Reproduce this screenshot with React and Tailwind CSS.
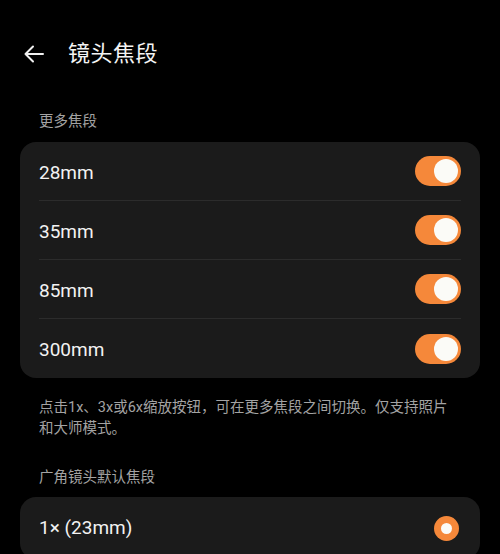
import React, { useState } from "react";

const Toggle = ({ on, onClick }) => (
  <button
    type="button"
    onClick={onClick}
    className={`relative w-[46px] h-[30px] rounded-full flex items-center px-[3px] ${
      on ? "bg-[#f5883a] justify-end" : "bg-[#3a3a3a] justify-start"
    }`}
  >
    <span className="block w-[24px] h-[24px] rounded-full bg-[#fbfbf7]" />
  </button>
);

const App = () => {
  const [lenses, setLenses] = useState({
    "28mm": true,
    "35mm": true,
    "85mm": true,
    "300mm": true,
  });

  const flip = (k) => setLenses({ ...lenses, [k]: !lenses[k] });
  const keys = Object.keys(lenses);

  return (
    <div
      className="w-[500px] h-[554px] overflow-hidden bg-black text-white"
      style={{ fontFamily: '"Roboto", "Noto Sans CJK SC", sans-serif' }}
    >
      {/* Header */}
      <div className="flex items-center h-[104px] pl-[22px] pt-[3px]">
        <svg width="24" height="24" viewBox="0 0 24 24" fill="none" className="mr-[22px]">
          <path d="M21 12H3.5M11 4.5L3.5 12L11 19.5" stroke="#f0f0f0" strokeWidth="2" strokeLinecap="round" strokeLinejoin="round" />
        </svg>
        <h1 className="text-[22px] font-normal tracking-[0.5px] text-[#f4f4f4]">镜头焦段</h1>
      </div>

      {/* More focal lengths */}
      <p className="px-[39px] mt-[8px] text-[14.5px] text-[#a3a3a3] leading-[20px]">更多焦段</p>
      <div className="mx-[20px] mt-[10px] rounded-[16px] bg-[#1b1b1b] px-[19px]">
        {keys.map((k, i) => (
          <div
            key={k}
            className={`flex items-center justify-between h-[59px] ${
              i < keys.length - 1 ? "border-b border-[#2c2c2c]" : ""
            }`}
          >
            <span className="text-[19px] text-[#f2f2f2] pt-[4px]">{k}</span>
            <Toggle on={lenses[k]} onClick={() => flip(k)} />
          </div>
        ))}
      </div>

      <p className="pl-[39px] pr-[46px] mt-[19px] text-[14.5px] leading-[21px] text-[#a3a3a3]">
        点击1x、3x或6x缩放按钮，可在更多焦段之间切换。仅支持照片和大师模式。
      </p>

      {/* Default focal length */}
      <p className="px-[39px] mt-[29px] text-[14.5px] text-[#a3a3a3] leading-[20px]">广角镜头默认焦段</p>
      <div className="mx-[20px] mt-[9px] rounded-[16px] bg-[#1b1b1b] px-[19px]">
        <div className="flex items-center justify-between h-[62px]">
          <span className="text-[19px] text-[#f2f2f2]">1× (23mm)</span>
          <span className="w-[25px] h-[25px] mr-[2px] rounded-full bg-[#f5883a] flex items-center justify-center">
            <span className="w-[11px] h-[11px] rounded-full bg-[#fbfbf7]" />
          </span>
        </div>
      </div>
    </div>
  );
};

export default App;
